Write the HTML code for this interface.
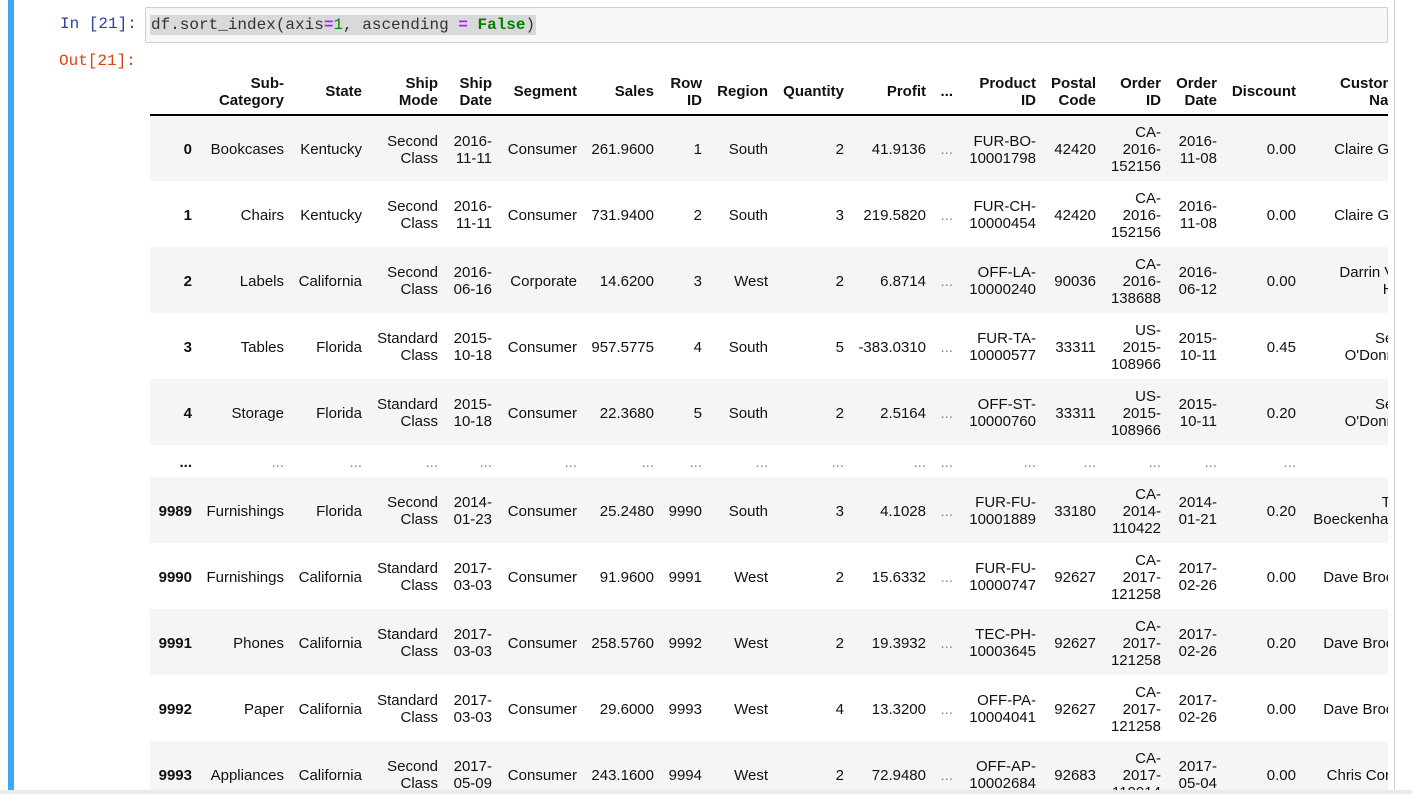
<!DOCTYPE html>
<html><head><meta charset="utf-8"><style>
*{margin:0;padding:0;box-sizing:border-box}
body{width:1412px;height:794px;background:#fff;position:relative;overflow:hidden;font-family:"Liberation Sans",Arial,sans-serif}
.bar{position:absolute;left:8px;top:0;width:6px;height:794px;background:#42a5f5}
.vline{position:absolute;left:1394px;top:0;width:1px;height:792px;background:#cfcfcf}
.bot{position:absolute;left:0;top:790px;width:1412px;height:4px;background:#e8eaec}
.pin{position:absolute;left:60px;top:15px;font:16px "Liberation Mono",monospace;color:#303f9f}
.pout{position:absolute;left:59px;top:52px;font:16px "Liberation Mono",monospace;color:#d84315}
.inbox{position:absolute;left:145px;top:7px;width:1243px;height:36px;background:#f7f7f7;border:1px solid #cfcfcf;border-radius:2px}
.code{position:absolute;left:150px;top:15px;font:16px/20px "Liberation Mono",monospace;color:#333;background:#d9d9d9;padding:0 1px}
.g{color:#008000;font-weight:bold}.p{color:#aa22ff;font-weight:bold}.n{color:#080}
.wrap{position:absolute;left:150px;top:70px;width:1238px;height:724px;overflow:hidden}
table{border-collapse:collapse;table-layout:fixed;width:1260px;font-size:15px;line-height:17px;color:#111}
td,th{text-align:right;vertical-align:middle;padding:0;white-space:nowrap;overflow:visible}
th{font-weight:bold;height:45px;border-bottom:2px solid #000;padding-bottom:1px}
tr.r td{height:66px;padding-top:2px}
tr.e td{height:32px;padding-top:2px}
tr.s td{background:#f5f5f5}
td.i{font-weight:bold}
.dots{color:#888}
</style></head><body>
<div class="bar"></div>
<div class="vline"></div>
<div class="pin">In [21]:</div>
<div class="inbox"></div>
<div class="code">df.sort_index(axis<span class="p">=</span><span class="n">1</span>, ascending <span class="p">=</span> <span class="g">False</span>)</div>
<div class="pout">Out[21]:</div>
<div class="wrap"><table>
<colgroup><col style="width:42px"><col style="width:92px"><col style="width:78px"><col style="width:76px"><col style="width:54px"><col style="width:85px"><col style="width:77px"><col style="width:48px"><col style="width:66px"><col style="width:76px"><col style="width:82px"><col style="width:27px"><col style="width:83px"><col style="width:60px"><col style="width:65px"><col style="width:56px"><col style="width:79px"><col style="width:114px"></colgroup>
<tr><th></th><th>Sub-<br>Category</th><th>State</th><th>Ship<br>Mode</th><th>Ship<br>Date</th><th>Segment</th><th>Sales</th><th>Row<br>ID</th><th>Region</th><th>Quantity</th><th>Profit</th><th>...</th><th>Product<br>ID</th><th>Postal<br>Code</th><th>Order<br>ID</th><th>Order<br>Date</th><th>Discount</th><th>Customer<br>Name</th></tr>
<tr class="r s"><td class="i">0</td><td>Bookcases</td><td>Kentucky</td><td>Second<br>Class</td><td>2016-<br>11-11</td><td>Consumer</td><td>261.9600</td><td>1</td><td>South</td><td>2</td><td>41.9136</td><td class="dots">...</td><td>FUR-BO-<br>10001798</td><td>42420</td><td>CA-<br>2016-<br>152156</td><td>2016-<br>11-08</td><td>0.00</td><td>Claire Gute</td></tr>
<tr class="r"><td class="i">1</td><td>Chairs</td><td>Kentucky</td><td>Second<br>Class</td><td>2016-<br>11-11</td><td>Consumer</td><td>731.9400</td><td>2</td><td>South</td><td>3</td><td>219.5820</td><td class="dots">...</td><td>FUR-CH-<br>10000454</td><td>42420</td><td>CA-<br>2016-<br>152156</td><td>2016-<br>11-08</td><td>0.00</td><td>Claire Gute</td></tr>
<tr class="r s"><td class="i">2</td><td>Labels</td><td>California</td><td>Second<br>Class</td><td>2016-<br>06-16</td><td>Corporate</td><td>14.6200</td><td>3</td><td>West</td><td>2</td><td>6.8714</td><td class="dots">...</td><td>OFF-LA-<br>10000240</td><td>90036</td><td>CA-<br>2016-<br>138688</td><td>2016-<br>06-12</td><td>0.00</td><td>Darrin Van<br>Huff</td></tr>
<tr class="r"><td class="i">3</td><td>Tables</td><td>Florida</td><td>Standard<br>Class</td><td>2015-<br>10-18</td><td>Consumer</td><td>957.5775</td><td>4</td><td>South</td><td>5</td><td>-383.0310</td><td class="dots">...</td><td>FUR-TA-<br>10000577</td><td>33311</td><td>US-<br>2015-<br>108966</td><td>2015-<br>10-11</td><td>0.45</td><td>Sean<br>O'Donnell</td></tr>
<tr class="r s"><td class="i">4</td><td>Storage</td><td>Florida</td><td>Standard<br>Class</td><td>2015-<br>10-18</td><td>Consumer</td><td>22.3680</td><td>5</td><td>South</td><td>2</td><td>2.5164</td><td class="dots">...</td><td>OFF-ST-<br>10000760</td><td>33311</td><td>US-<br>2015-<br>108966</td><td>2015-<br>10-11</td><td>0.20</td><td>Sean<br>O'Donnell</td></tr>
<tr class="e"><td class="i">...</td><td class="dots">...</td><td class="dots">...</td><td class="dots">...</td><td class="dots">...</td><td class="dots">...</td><td class="dots">...</td><td class="dots">...</td><td class="dots">...</td><td class="dots">...</td><td class="dots">...</td><td class="dots">...</td><td class="dots">...</td><td class="dots">...</td><td class="dots">...</td><td class="dots">...</td><td class="dots">...</td><td class="dots">...</td></tr>
<tr class="r s"><td class="i">9989</td><td>Furnishings</td><td>Florida</td><td>Second<br>Class</td><td>2014-<br>01-23</td><td>Consumer</td><td>25.2480</td><td>9990</td><td>South</td><td>3</td><td>4.1028</td><td class="dots">...</td><td>FUR-FU-<br>10001889</td><td>33180</td><td>CA-<br>2014-<br>110422</td><td>2014-<br>01-21</td><td>0.20</td><td>Tom<br>Boeckenhauer</td></tr>
<tr class="r"><td class="i">9990</td><td>Furnishings</td><td>California</td><td>Standard<br>Class</td><td>2017-<br>03-03</td><td>Consumer</td><td>91.9600</td><td>9991</td><td>West</td><td>2</td><td>15.6332</td><td class="dots">...</td><td>FUR-FU-<br>10000747</td><td>92627</td><td>CA-<br>2017-<br>121258</td><td>2017-<br>02-26</td><td>0.00</td><td>Dave Brooke</td></tr>
<tr class="r s"><td class="i">9991</td><td>Phones</td><td>California</td><td>Standard<br>Class</td><td>2017-<br>03-03</td><td>Consumer</td><td>258.5760</td><td>9992</td><td>West</td><td>2</td><td>19.3932</td><td class="dots">...</td><td>TEC-PH-<br>10003645</td><td>92627</td><td>CA-<br>2017-<br>121258</td><td>2017-<br>02-26</td><td>0.20</td><td>Dave Brooke</td></tr>
<tr class="r"><td class="i">9992</td><td>Paper</td><td>California</td><td>Standard<br>Class</td><td>2017-<br>03-03</td><td>Consumer</td><td>29.6000</td><td>9993</td><td>West</td><td>4</td><td>13.3200</td><td class="dots">...</td><td>OFF-PA-<br>10004041</td><td>92627</td><td>CA-<br>2017-<br>121258</td><td>2017-<br>02-26</td><td>0.00</td><td>Dave Brooke</td></tr>
<tr class="r s"><td class="i">9993</td><td>Appliances</td><td>California</td><td>Second<br>Class</td><td>2017-<br>05-09</td><td>Consumer</td><td>243.1600</td><td>9994</td><td>West</td><td>2</td><td>72.9480</td><td class="dots">...</td><td>OFF-AP-<br>10002684</td><td>92683</td><td>CA-<br>2017-<br>119914</td><td>2017-<br>05-04</td><td>0.00</td><td>Chris Cortes</td></tr>
</table></div>
<div class="bot"></div>
</body></html>
